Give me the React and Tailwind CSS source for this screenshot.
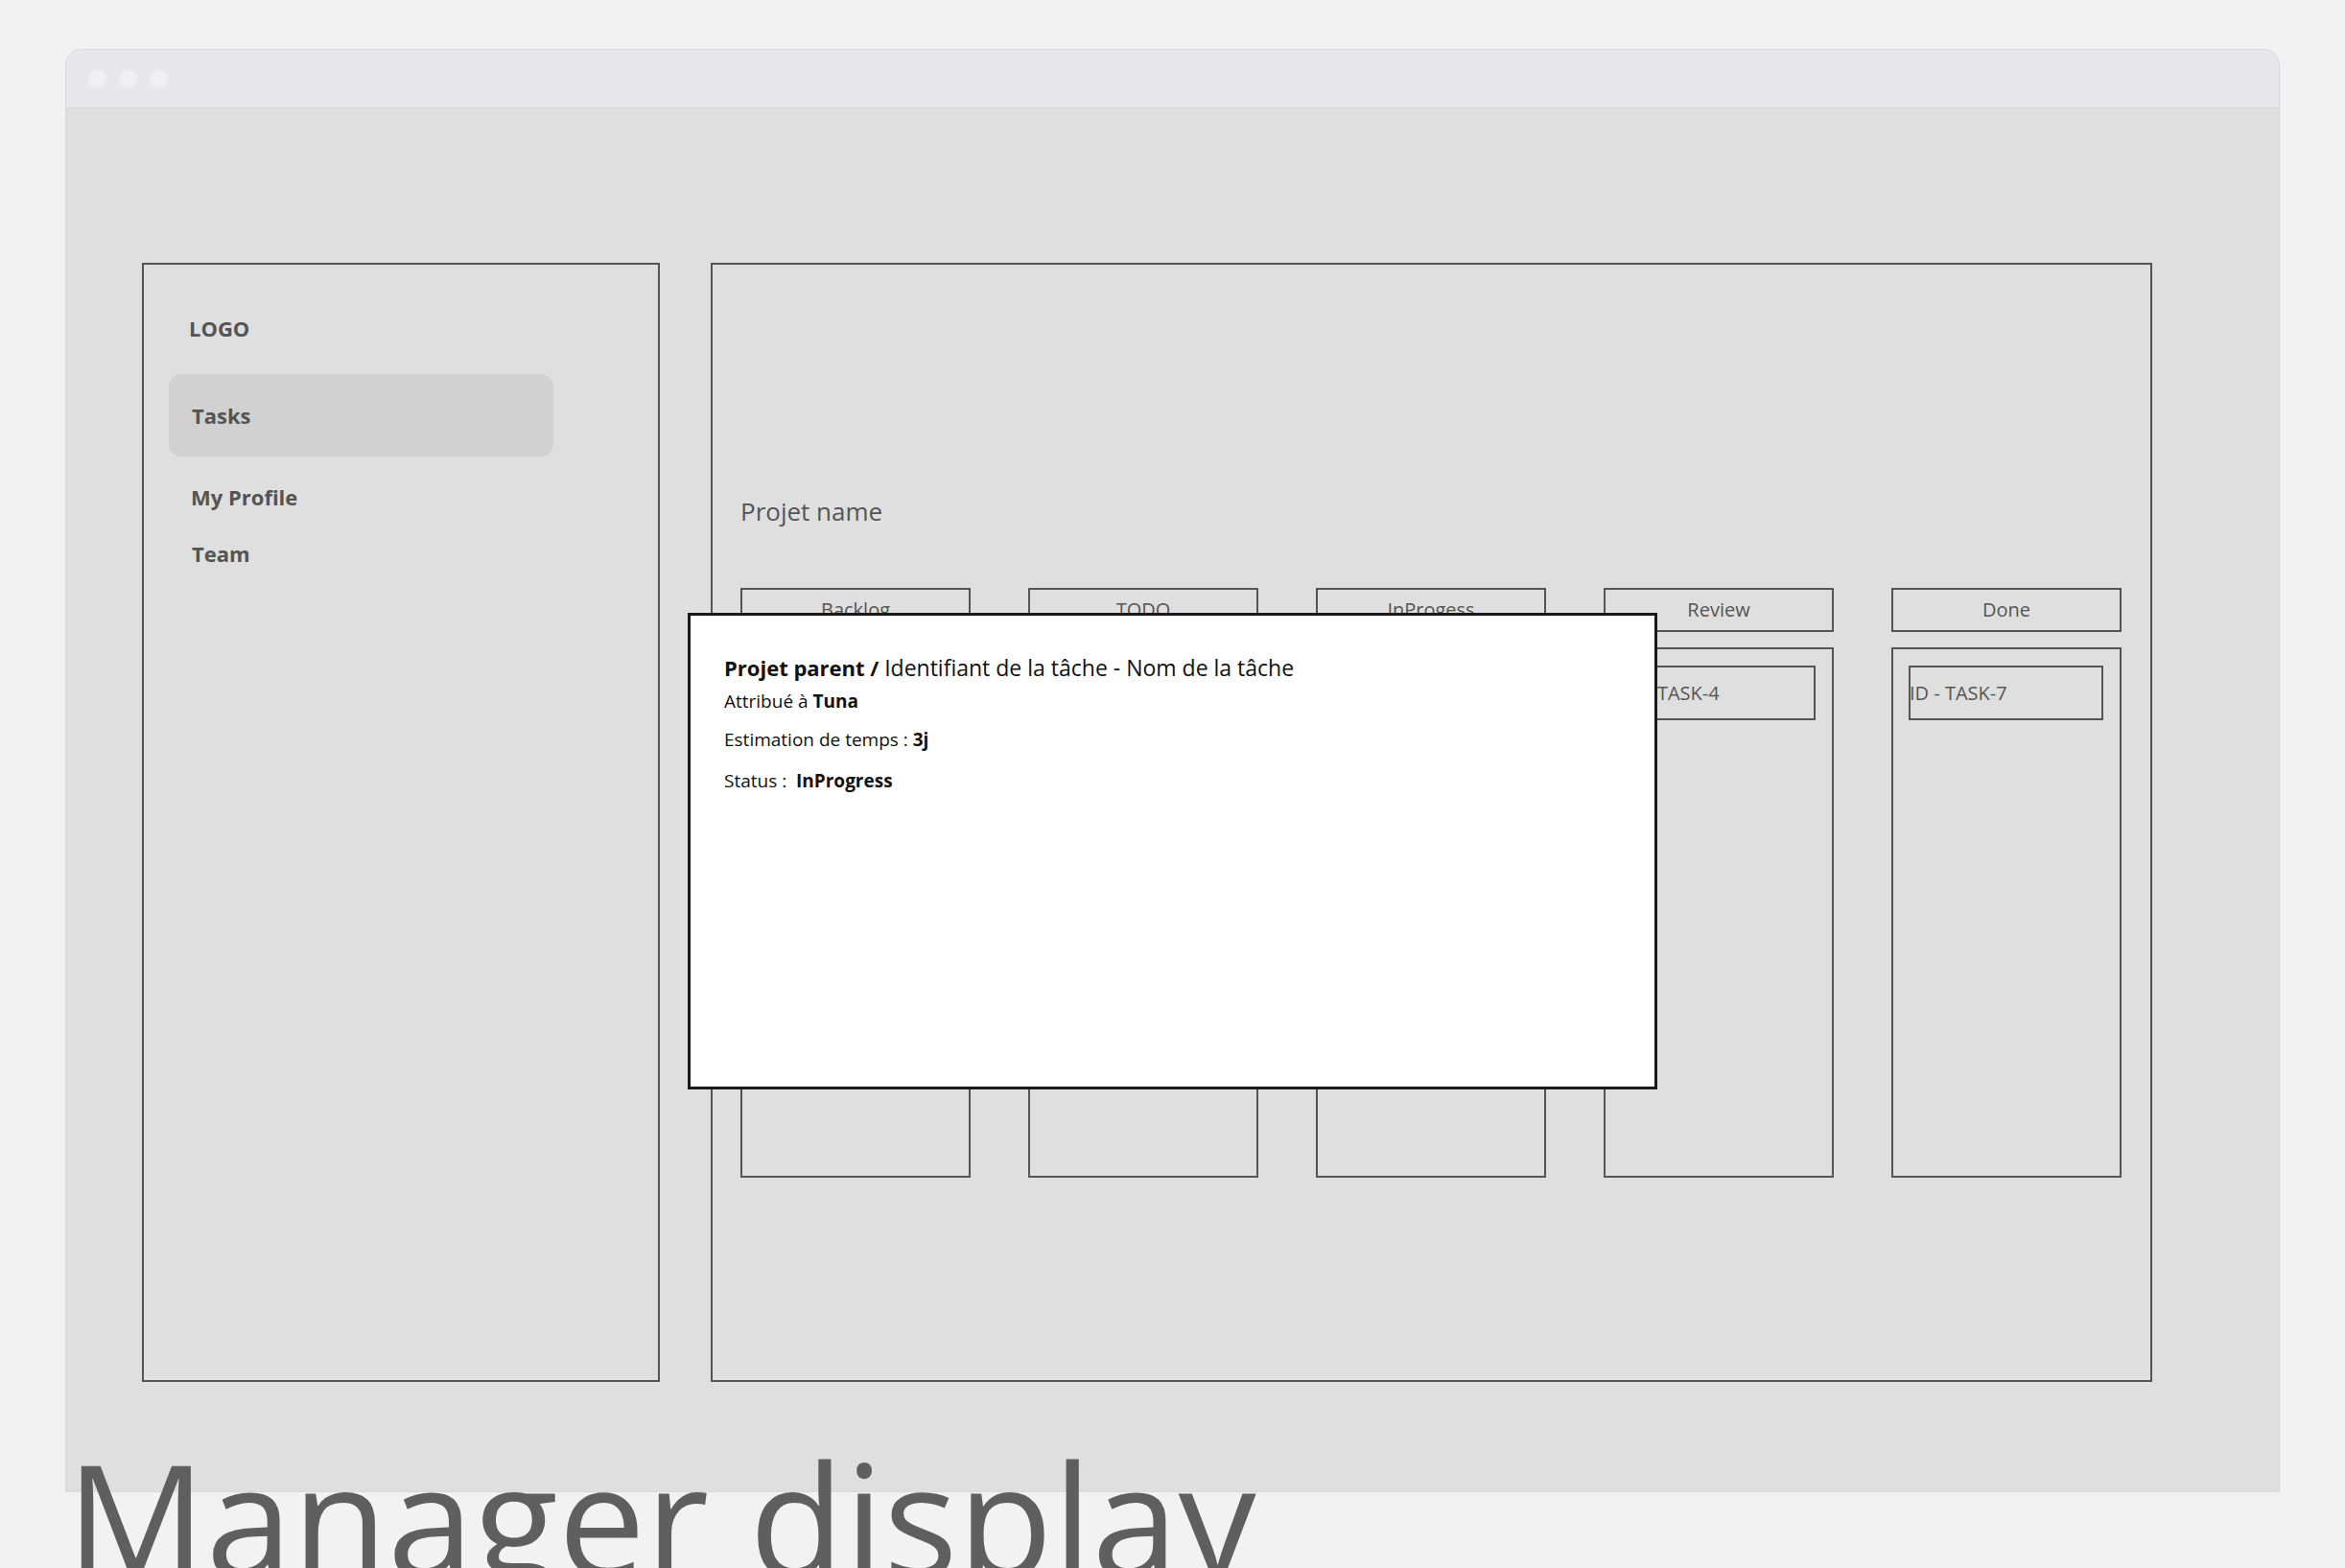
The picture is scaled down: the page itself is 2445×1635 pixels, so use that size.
import React from 'react';

const columns = [
  { title: 'Backlog', task: 'ID - TASK-1' },
  { title: 'TODO', task: 'ID - TASK-2' },
  { title: 'InProgess', task: 'ID - TASK-3' },
  { title: 'Review', task: 'ID - TASK-4' },
  { title: 'Done', task: 'ID - TASK-7' },
];

const Sidebar = () => (
  <aside className="w-[540px] shrink-0 border-2 border-[#555555] pt-[51px] pl-[26px] flex flex-col">
    <div className="pl-[21px] text-[22px] leading-[30px] font-bold text-[#545454]">LOGO</div>
    <div className="mt-[33px] w-[401px] h-[86px] rounded-[13px] bg-[#d1d1d1] flex items-center pl-[24px] text-[22px] leading-[30px] font-bold text-[#545454]">
      Tasks
    </div>
    <div className="mt-[27px] pl-[23px] text-[22px] leading-[30px] font-bold text-[#545454]">My Profile</div>
    <div className="mt-[29px] pl-[24px] text-[22px] leading-[30px] font-bold text-[#545454]">Team</div>
  </aside>
);

const Board = () => (
  <main className="flex-1 border-2 border-[#555555] pt-[240px] pl-[29px]">
    <h2 className="text-[26px] leading-[34px] text-[#555555]">Projet name</h2>
    <div className="mt-[63px] flex gap-[60px]">
      {columns.map((col) => (
        <div key={col.title} className="w-[240px] flex flex-col">
          <div className="h-[46px] border-2 border-[#555555] flex items-center justify-center text-[20px] text-[#555555]">
            {col.title}
          </div>
          <div className="mt-[16px] h-[553px] border-2 border-[#555555] pt-[17px] pl-[16px]">
            <div className="w-[203px] h-[57px] border-2 border-[#555555] flex items-center text-[20px] text-[#555555] whitespace-nowrap">
              <span className="-ml-[1px]">{col.task}</span>
            </div>
          </div>
        </div>
      ))}
    </div>
  </main>
);

const TaskModal = () => (
  <div className="absolute left-[648px] top-[526px] w-[1011px] h-[497px] bg-white border-[3px] border-[#1a1a1a] pt-[39px] pl-[35px] text-[#111111]">
    <p className="text-[22px] leading-[30px]">
      <span className="font-bold">Projet parent / </span>
      <span className="text-[23px]">Identifiant de la tâche - Nom de la tâche</span>
    </p>
    <p className="mt-[7px] text-[19px] leading-[26px]">
      Attribué à <span className="font-bold">Tuna</span>
    </p>
    <p className="mt-[14px] text-[19px] leading-[26px]">
      Estimation de temps : <span className="font-bold">3j</span>
    </p>
    <p className="mt-[17px] text-[19px] leading-[26px] whitespace-pre">
      Status :  <span className="font-bold">InProgress</span>
    </p>
  </div>
);

export default function App() {
  return (
    <div
      className="h-[1635px] overflow-hidden bg-[#f2f2f2] pt-[52px] px-[69px]"
      style={{ fontFamily: '"Open Sans", "Noto Sans", sans-serif' }}
    >
      <div className="h-[1503px] rounded-t-[16px] overflow-hidden bg-[#dfdfdf] flex flex-col shadow-[0_0_0_1px_#d9d9db]">
        <div className="h-[61px] shrink-0 bg-[#e8e8ec] border-b border-[#d6d6da] flex items-center gap-[13px] pl-[23px]">
          <span className="w-[19px] h-[19px] rounded-full bg-[#f0f0f4]"></span>
          <span className="w-[19px] h-[19px] rounded-full bg-[#f0f0f4]"></span>
          <span className="w-[19px] h-[19px] rounded-full bg-[#f0f0f4]"></span>
        </div>
        <div className="relative flex-1 flex gap-[53px] pt-[161px] pb-[114px] pl-[79px] pr-[132px]">
          <Sidebar />
          <Board />
          <TaskModal />
        </div>
      </div>
      <h1 className="relative -mt-[55px] text-[162px] leading-none text-[#5f5f5f] whitespace-nowrap">
        Manager display
      </h1>
    </div>
  );
}
